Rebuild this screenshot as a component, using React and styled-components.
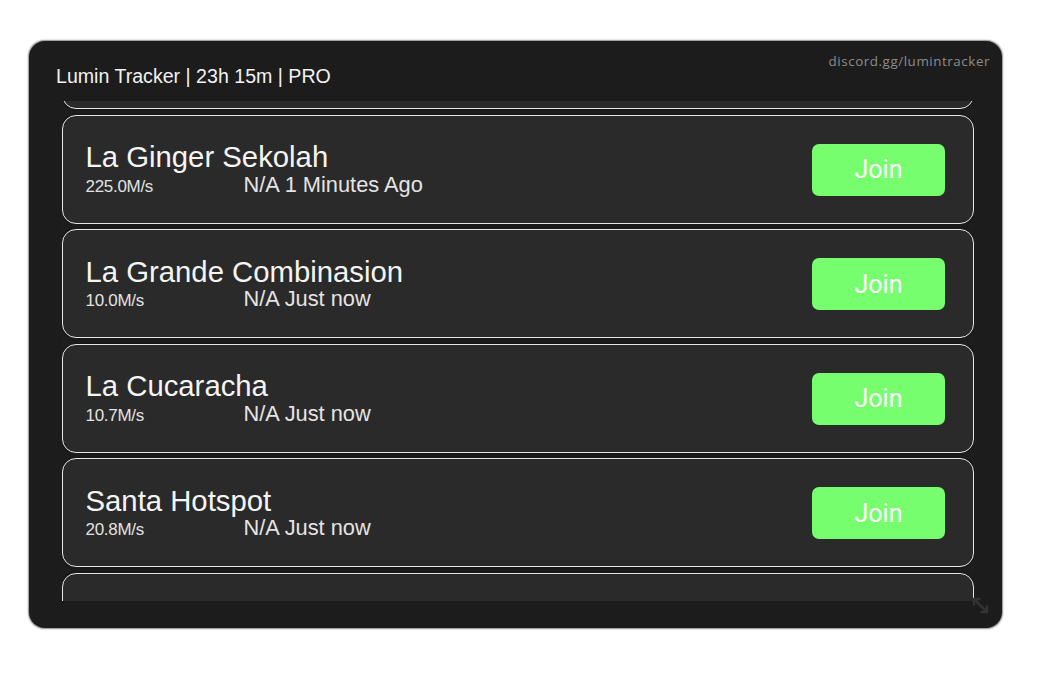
import React, { useLayoutEffect, useRef } from "react";
import styled, { createGlobalStyle } from "styled-components";

const Global = createGlobalStyle`
  html, body { margin: 0; padding: 0; background: #ffffff; }
  body { font-family: "Liberation Sans", Arial, sans-serif; }
`;

const Page = styled.div`
  width: 1053px;
  height: 683px;
  padding: 41px 0 0 29px;
  box-sizing: border-box;
`;

const Panel = styled.div`
  position: relative;
  width: 973px;
  height: 587px;
  box-sizing: border-box;
  background: #1c1c1c;
  border-radius: 16px;
  box-shadow: 0 0 1.5px 0.5px rgba(0, 0, 0, 0.45);
  display: flex;
  flex-direction: column;
`;

const Header = styled.div`
  height: 60px;
  flex: none;
  display: flex;
  justify-content: space-between;
  align-items: flex-start;
  padding: 0 12px 0 27px;
`;

const Title = styled.div`
  margin-top: 26px;
  font-family: "Liberation Sans", Arial, sans-serif;
  font-size: 19.6px;
  line-height: 1;
  color: #f2f2f2;
  white-space: nowrap;
`;

const Discord = styled.div`
  margin-top: 13.5px;
  font-family: "Open Sans", "Noto Sans", sans-serif;
  font-size: 13.4px;
  line-height: 1;
  letter-spacing: 0.55px;
  color: #8c8c8c;
`;

const Scroller = styled.div`
  height: 500px;
  flex: none;
  overflow: hidden;
  margin: 0 28px 0 33px;
  background: #1e1e1e;
`;

const List = styled.div`
  display: flex;
  flex-direction: column;
  gap: 5.5px;
`;

const Card = styled.div`
  height: 109px;
  flex: none;
  box-sizing: border-box;
  border: 1.5px solid #e6e6e6;
  border-radius: 14px;
  background: #2a2a2a;
  box-shadow: 0 0 5px rgba(0, 0, 0, 0.35);
  display: flex;
  align-items: center;
  justify-content: space-between;
  padding: 1px 28px 0 22.5px;
`;

const Info = styled.div`
  display: flex;
  flex-direction: column;
  gap: 2.5px;
`;

const Name = styled.div`
  font-family: "Liberation Sans", Arial, sans-serif;
  font-size: 29.3px;
  line-height: 29px;
  color: #f5f5f5;
  white-space: nowrap;
`;

const Sub = styled.div`
  display: flex;
  align-items: baseline;
  line-height: 21px;
`;

const Speed = styled.span`
  width: 158px;
  font-family: "Liberation Sans", Arial, sans-serif;
  font-size: 17px;
  letter-spacing: -0.3px;
  color: #e2e2e2;
`;

const Status = styled.span`
  font-family: "Liberation Sans", Arial, sans-serif;
  font-size: 21.8px;
  color: #e4e4e4;
  white-space: nowrap;
`;

const JoinButton = styled.button`
  width: 133px;
  height: 52px;
  border: none;
  border-radius: 7px;
  background: #77fe6f;
  color: #ffffff;
  font-family: Roboto, "Liberation Sans", Arial, sans-serif;
  font-size: 25px;
  padding: 0;
  cursor: pointer;
`;

const Grip = styled.div`
  position: absolute;
  right: 12px;
  bottom: 13px;
  width: 19px;
  height: 19px;
  color: #333333;
`;

const servers = [
  { name: "Los Tralaleritos", speed: "150.0M/s", status: "N/A Just now" },
  { name: "La Ginger Sekolah", speed: "225.0M/s", status: "N/A 1 Minutes Ago" },
  { name: "La Grande Combinasion", speed: "10.0M/s", status: "N/A Just now" },
  { name: "La Cucaracha", speed: "10.7M/s", status: "N/A Just now" },
  { name: "Santa Hotspot", speed: "20.8M/s", status: "N/A Just now" },
  { name: "Garama and Madundung", speed: "50.0M/s", status: "N/A Just now" },
];

export default function App() {
  const ref = useRef(null);
  useLayoutEffect(() => {
    if (ref.current) ref.current.scrollTop = 101;
  }, []);
  return (
    <Page>
      <Global />
      <Panel>
        <Header>
          <Title>Lumin Tracker | 23h 15m | PRO</Title>
          <Discord>discord.gg/lumintracker</Discord>
        </Header>
        <Scroller ref={ref}>
          <List>
            {servers.map((s) => (
              <Card key={s.name}>
                <Info>
                  <Name>{s.name}</Name>
                  <Sub>
                    <Speed>{s.speed}</Speed>
                    <Status>{s.status}</Status>
                  </Sub>
                </Info>
                <JoinButton>Join</JoinButton>
              </Card>
            ))}
          </List>
        </Scroller>
        <Grip>
          <svg width="19" height="19" viewBox="0 0 19 19" fill="none" stroke="currentColor" strokeWidth="2.5" strokeLinecap="round" strokeLinejoin="round">
            <path d="M3 3 L16 16" />
            <path d="M3 8.5 L3 3 L8.5 3" />
            <path d="M10.5 16 L16 16 L16 10.5" />
          </svg>
        </Grip>
      </Panel>
    </Page>
  );
}
